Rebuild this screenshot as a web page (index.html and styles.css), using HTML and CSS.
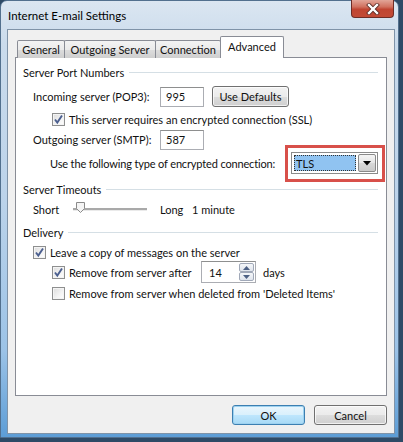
FILE: index.html
```html
<!DOCTYPE html>
<html>
<head>
<meta charset="utf-8">
<link rel="stylesheet" href="styles.css">
</head>
<body>
<div class="window">
  <div class="titlebar">
    <span class="title">Internet E-mail Settings</span>
    <div class="close">
      <svg width="16" height="12" viewBox="0 0 16 12"><path d="M4 2 L12 10 M12 2 L4 10" stroke="#5a2a24" stroke-width="4" stroke-linecap="square"/><path d="M4 2 L12 10 M12 2 L4 10" stroke="#fff" stroke-width="2.4" stroke-linecap="square"/></svg>
    </div>
  </div>
  <div class="client">
    <div class="tabs">
      <div class="tab t-general">General</div>
      <div class="tab t-outgoing">Outgoing Server</div>
      <div class="tab t-connection">Connection</div>
      <div class="tab tab-active t-advanced">Advanced</div>
    </div>
    <div class="panel">
      <div class="group"><span>Server Port Numbers</span><i class="rule"></i></div>
      <div class="row r-incoming">
        <span class="lbl">Incoming server (POP3):</span>
        <div class="input port">995</div>
        <div class="btn defaults">Use Defaults</div>
      </div>
      <div class="row r-ssl sub">
        <span class="cb checked"><svg width="13" height="13" viewBox="0 0 13 13"><path d="M3 6.5 L5.3 9.5 L10 2.5" fill="none" stroke="#4b5f8f" stroke-width="1.9"/></svg></span>
        <span>This server requires an encrypted connection (SSL)</span>
      </div>
      <div class="row r-outgoing">
        <span class="lbl">Outgoing server (SMTP):</span>
        <div class="input port">587</div>
      </div>
      <div class="row r-enc">
        <span class="enc-lbl">Use the following type of encrypted connection:</span>
        <div class="highlight">
          <div class="combo">
            <div class="combo-val"><span>TLS</span></div>
            <div class="combo-arrow"><svg width="8" height="5" viewBox="0 0 8 5"><path d="M0 0 H8 L4 4.5 Z" fill="#000"/></svg></div>
          </div>
        </div>
      </div>
      <div class="group g2"><span>Server Timeouts</span><i class="rule"></i></div>
      <div class="row r-short">
        <span class="short">Short</span>
        <div class="slider">
          <i class="track"></i>
          <svg class="thumb" width="9" height="11" viewBox="0 0 9 11"><path d="M0.5 0.5 H8.5 V6.5 L4.5 10.5 L0.5 6.5 Z" fill="#f4f4f4" stroke="#8a8a8a"/></svg>
        </div>
        <span class="long">Long</span>
        <span>1 minute</span>
      </div>
      <div class="group g3"><span>Delivery</span><i class="rule"></i></div>
      <div class="row r-leave">
        <span class="cb checked"><svg width="13" height="13" viewBox="0 0 13 13"><path d="M3 6.5 L5.3 9.5 L10 2.5" fill="none" stroke="#4b5f8f" stroke-width="1.9"/></svg></span>
        <span>Leave a copy of messages on the server</span>
      </div>
      <div class="row r-after sub">
        <span class="cb checked"><svg width="13" height="13" viewBox="0 0 13 13"><path d="M3 6.5 L5.3 9.5 L10 2.5" fill="none" stroke="#4b5f8f" stroke-width="1.9"/></svg></span>
        <span class="after-lbl">Remove from server after</span>
        <div class="spin">
          <span class="spin-val">14</span>
          <div class="spin-btns">
            <div class="sb"><svg width="7" height="4" viewBox="0 0 7 4"><path d="M0 4 H7 L3.5 0 Z" fill="#4d6185"/></svg></div>
            <div class="sb"><svg width="7" height="4" viewBox="0 0 7 4"><path d="M0 0 H7 L3.5 4 Z" fill="#4d6185"/></svg></div>
          </div>
        </div>
        <span class="days">days</span>
      </div>
      <div class="row r-deleted sub">
        <span class="cb"></span>
        <span>Remove from server when deleted from 'Deleted Items'</span>
      </div>
    </div>
    <div class="buttons">
      <div class="btn dlg ok">OK</div>
      <div class="btn dlg">Cancel</div>
    </div>
  </div>
</div>
</body>
</html>
```

FILE: styles.css
```css
html, body {
  margin: 0;
  padding: 0;
}
body {
  width: 403px;
  height: 442px;
  background: #2e4a66;
  font-family: "Lato", "Liberation Sans", sans-serif;
  font-size: 11px;
  color: #111;
  overflow: hidden;
  white-space: nowrap;
}
.window {
  width: 399px;
  height: 438px;
  box-sizing: border-box;
  border: 1px solid #52708e;
  border-radius: 7px 7px 0 0;
  background: linear-gradient(180deg, #dbe6f1 0%, #cadbec 10%, #bcd3ea 45%, #9cc3e7 80%, #5d9dd6 100%);
  padding: 0 3px 3px 6px;
  display: flex;
  flex-direction: column;
}
.titlebar {
  height: 28px;
  display: flex;
  justify-content: space-between;
  align-items: flex-start;
}
.title {
  margin-left: 1px;
  margin-top: 8px;
  font-size: 11.5px;
  color: #000;
}
.close {
  width: 43px;
  height: 18px;
  margin-top: -1px;
  margin-right: 1px;
  box-sizing: border-box;
  border: 1px solid #6e2c25;
  border-top: none;
  border-radius: 0 0 4px 4px;
  background: linear-gradient(180deg, #e2a598 0%, #d1715f 40%, #c04532 55%, #c24a36 100%);
  display: flex;
  align-items: center;
  justify-content: center;
}
.client {
  flex: 1;
  background: #f0f0f0;
  border: 1px solid #7f93a8;
  padding: 7px 7px 0 7px;
  display: flex;
  flex-direction: column;
}
.tabs {
  display: flex;
  align-items: flex-end;
  height: 21px;
  padding-left: 2px;
  margin-bottom: -1px;
  position: relative;
  z-index: 1;
}
.tab {
  box-sizing: border-box;
  height: 18px;
  border: 1px solid #898c95;
  border-bottom: none;
  border-radius: 2px 2px 0 0;
  background: linear-gradient(180deg, #f3f3f3 0%, #ebebeb 50%, #dddddd 51%, #cfcfcf 100%);
  display: flex;
  align-items: center;
  justify-content: center;
  margin-right: -1px;
  line-height: 1;
}
.t-general { width: 48px; }
.t-outgoing { width: 92px; }
.t-connection { width: 66px; }
.tab-active {
  height: 22px;
  width: 64px;
  background: #fff;
  padding-bottom: 3px;
}
.panel {
  height: 339px;
  box-sizing: border-box;
  background: #fff;
  border: 1px solid #898c95;
  padding: 0 8px 0 7px;
  display: flex;
  flex-direction: column;
}
.group {
  display: flex;
  align-items: center;
  height: 18px;
  margin-top: 5px;
}
.group .rule {
  flex: 1;
  height: 1px;
  background: #d5dfe5;
  margin-left: 5px;
  margin-top: 1px;
}
.g2 { margin-top: 6px; }
.g3 { margin-top: 5px; }
.row {
  display: flex;
  align-items: center;
  padding-left: 10px;
}
.row.sub { padding-left: 29px; }
.lbl { width: 127px; }
.r-incoming { height: 21px; margin-top: 5px; }
.r-ssl { height: 18px; margin-top: 3px; }
.r-outgoing { height: 21px; margin-top: 1px; }
.r-enc { height: 22px; margin-top: 2px; padding-left: 27px; }
.r-short { height: 18px; margin-top: 2px; }
.r-leave { height: 18px; margin-top: 2px; }
.r-after { height: 22px; margin-top: 0; }
.r-deleted { height: 18px; margin-top: 1px; }
.input {
  box-sizing: border-box;
  height: 20px;
  background: #fff;
  border: 1px solid #abadb3;
  border-top-color: #8e8f8f;
  display: flex;
  align-items: center;
  padding-left: 5px;
}
.port { width: 44px; }
.btn {
  box-sizing: border-box;
  height: 21px;
  border: 1px solid #707070;
  border-radius: 3px;
  background: linear-gradient(180deg, #f2f2f2 0%, #ebebeb 50%, #dddddd 51%, #cfcfcf 100%);
  box-shadow: inset 0 0 0 1px rgba(255,255,255,0.7);
  display: flex;
  align-items: center;
  justify-content: center;
}
.defaults { width: 77px; margin-left: 8px; }
.cb {
  box-sizing: border-box;
  width: 13px;
  height: 13px;
  border: 1px solid #8e8f8f;
  background: linear-gradient(135deg, #dcdcdc 0%, #f4f4f4 60%, #ffffff 100%);
  box-shadow: inset 0 0 0 1px #f4f4f4;
  margin-right: 4px;
  flex: none;
  position: relative;
}
.cb svg {
  position: absolute;
  left: -1px;
  top: -1px;
}
.enc-lbl {
  width: 235px;
  flex: none;
  letter-spacing: -0.15px;
}
.highlight {
  border: 3px solid #d8504a;
  padding: 4px 4px 5px 3px;
  margin: -7px 0 -8px 0;
}
.combo {
  box-sizing: border-box;
  width: 87px;
  height: 22px;
  border: 1px solid #8a8a8a;
  background: #fff;
  display: flex;
  padding: 2px 1px 2px 2px;
}
.combo-val {
  flex: 1;
  background: #90c3f1;
  outline: 1px dotted #333;
  outline-offset: -1px;
  display: flex;
  align-items: center;
  padding-left: 2px;
}
.combo-arrow {
  box-sizing: border-box;
  width: 18px;
  margin: -1px 0 -1px 2px;
  border: 1px solid #8a8a8a;
  border-radius: 2px;
  background: linear-gradient(180deg, #f4f4f4 0%, #e6e6e6 50%, #d8d8d8 51%, #cacaca 100%);
  display: flex;
  align-items: center;
  justify-content: center;
}
.short { width: 40px; }
.slider {
  width: 87px;
  height: 18px;
  display: flex;
  align-items: center;
  position: relative;
}
.track {
  display: block;
  width: 74px;
  height: 2px;
  background: #a9a9a9;
  border-bottom: 1px solid #eaeaea;
}
.thumb {
  position: absolute;
  left: 3px;
  top: 2px;
}
.long { width: 32px; }
.after-lbl { width: 132px; }
.spin {
  box-sizing: border-box;
  width: 55px;
  height: 22px;
  border: 1px solid #abadb3;
  border-top-color: #8e8f8f;
  background: #fff;
  display: flex;
  align-items: center;
  justify-content: space-between;
  padding-left: 7px;
  padding-right: 1px;
}
.spin-btns {
  display: flex;
  flex-direction: column;
  width: 15px;
  height: 18px;
}
.sb {
  flex: 1;
  box-sizing: border-box;
  border: 1px solid #a0a8b8;
  border-radius: 2px;
  background: linear-gradient(180deg, #f5f7fa 0%, #dfe4ec 100%);
  display: flex;
  align-items: center;
  justify-content: center;
}
.days { margin-left: 7px; }
.buttons {
  display: flex;
  justify-content: flex-end;
  gap: 9px;
  margin-top: 9px;
}
.dlg {
  width: 73px;
  height: 20px;
}
.ok {
  border-color: #3c7fb1;
  background: linear-gradient(180deg, #eaf6fd 0%, #d9f0fc 50%, #bee6fd 51%, #a7d9f5 100%);
  box-shadow: inset 0 0 0 1px #9ed2f0;
}
```
